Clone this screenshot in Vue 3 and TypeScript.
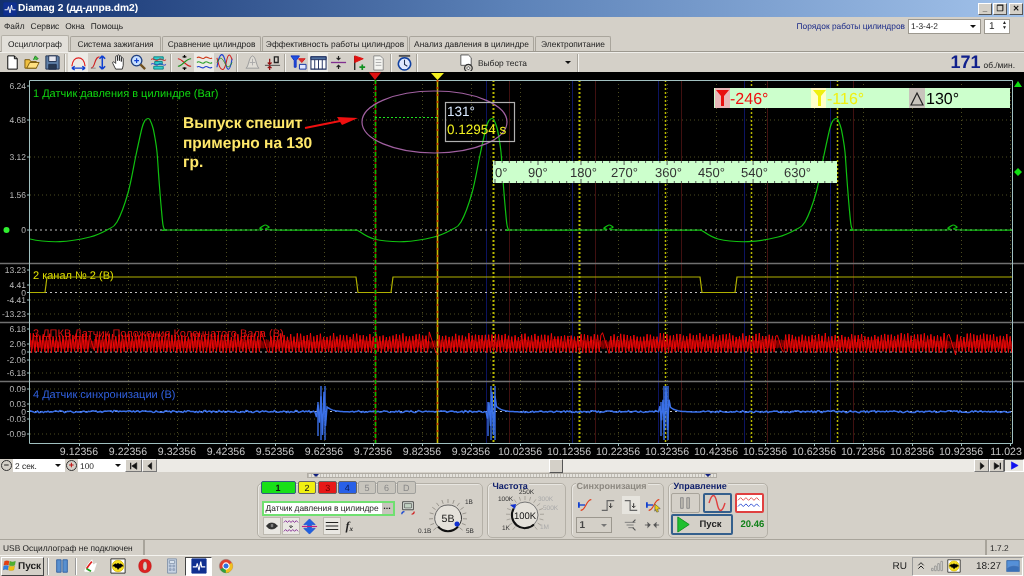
<script setup lang="ts">
import { h } from 'vue'

type P = [string, string, string, number?]
const icons: Record<string, P[]> = {
  fnew: [['M4 2h7l3 3v11H4z', '#000', '#fff', 1], ['M11 2v3h3', '#000', 'none', 1]],
  fopen: [['M1 15V6h5l1 2h6v7z', '#7a5a10', '#f0c040', 1], ['M3 15l3-6h10l-3 6z', '#7a5a10', '#ffe080', 1], ['M10 6l2-4 3 3-2 1', '#208020', '#40c040', 1]],
  fsave: [['M2 2h13l1 1v13H2z', '#203050', '#6080a8', 1], ['M5 2h8v6H5z', '#203050', '#e8e8f0', 1], ['M5 11h8v5H5z', '#203050', '#283850', 1]],
  amp: [['M2 13C3 1 15 1 16 13', '#e02020', 'none', 1.3], ['M2 15h14M2 15l3-2M2 15l3 2M16 15l-3-2M16 15l-3 2', '#1040d0', 'none', 1.4]],
  shift: [['M1 15C6 15 4 3 10 3', '#d02020', 'none', 1.2], ['M1 15h5', '#888', 'none', 1], ['M13 2v14M13 2l-3 3M13 2l3 3M13 16l-3-3M13 16l3-3', '#1040d0', 'none', 1.6]],
  hand: [['M6 16L3 10c-1-2 1-2 2-1l1 1V3c0-1.500 2-1.500 2 0v4V2c0-1.500 2-1.500 2 0v5V3c0-1.500 2-1.500 2 0v5V5c0-1.500 2-1.500 2 0v7l-1 4z', '#222', '#fff', 0.9]],
  zoom: [['M7 1.500a5.500 5.500 0 1 0 .01 0z', '#204080', '#c8e0ff', 1.4], ['M4.500 7h5M7 4.500v5', '#1040d0', 'none', 1.3], ['M11 11l5 5', '#705020', 'none', 2.4]],
  stack: [['M4 3h10v3H4zM5 8h8v3H5zM4 13h10v3H4z', '#108080', '#30d0d0', 1], ['M1 6c3-3 5 3 8 0s5 3 8 0', '#d02020', 'none', 1], ['M1 11c3-3 5 3 8 0s5 3 8 0', '#2040d0', 'none', 1]],
  cross: [['M2 5c5 0 8 8 14 8', '#d02020', 'none', 1.2], ['M2 13c5 0 8-8 14-8', '#209020', 'none', 1.2], ['M9 1v3M9 14v3M7 3h4M7 15h4', '#000', 'none', 1.3]],
  waves: [['M1 4c3-3 5 3 8 0s5 3 8 0', '#d04020', 'none', 1.2], ['M1 9c3-3 5 3 8 0s5 3 8 0', '#30a030', 'none', 1.2], ['M1 14c3-3 5 3 8 0s5 3 8 0', '#2040d0', 'none', 1.2]],
  over: [['M1 14C4-4 8-2 10 9s5 9 7-4', '#2040d0', 'none', 1.2], ['M1 4c4 18 8 14 10 4s4-8 6-2', '#d02020', 'none', 1.1], ['M1 9c3-6 5-6 8 0s5 6 8 0', '#209020', 'none', .9]],
  bell: [['M2 15C5 14 5 3 9 2c4 1 4 12 7 13z', '#999', '#e0ddd6', 1], ['M9 5v7M6 9h6', '#aaa', 'none', 1]],
  zero: [['M1 12h16', '#444', 'none', 1], ['M6 5v5M6 14v3M4 9l2 2 2-2M4 15l2-2 2 2', '#901010', 'none', 1.3], ['M11 3h4v6h-4z', '#222', 'none', 1.4]],
  funnel: [['M1 2h9L6.500 7v7H4.500V7z', '#1030c0', '#2050e0', 1], ['M9 5h7l-3.500 4z', '#d02020', '#e03030', 1], ['M10 11h7v5h-7z', '#1030a0', '#e0e8ff', 1]],
  table: [['M1 3h16v13H1z', '#203060', '#fff', 1.100], ['M1 3h16v3H1z', '#203060', '#5070a0', 1], ['M5 6v10M9 6v10M13 6v10', '#203060', 'none', 1]],
  hline: [['M1 9h16', '#803090', 'none', 1.4], ['M9 2v4M7 4l2 2 2-2M9 16v-4M7 14l2-2 2 2', '#222', 'none', 1.2]],
  flag: [['M5 2v15', '#222', 'none', 1.400], ['M5 2l9 3-9 4z', '#e01010', '#e01010', 1], ['M13 11v6M10 14h6', '#109020', 'none', 1.8]],
  doc: [['M4 2h7l3 3v12H4z', '#888', '#f4f4f0', 1], ['M6 6h6M6 9h6M6 12h6', '#aaa', 'none', 1]],
  clock: [['M9 4a6.500 6.500 0 1 0 .01 0z', '#1040a0', '#e0e8ff', 1.600], ['M9 6v5l3 2', '#203050', 'none', 1.100], ['M3 2h12', '#555', 'none', 2]],
  eye: [['M2 9c3-5 10-5 14 0c-4 5-11 5-14 0z', '#222', '#333', 1], ['M8 7h2v3H8z', '#888', '#888', 1]],
  wave2: [['M1 5l2-2 2 2 2-2 2 2 2-2 2 2 2-2 2 2', '#802090', 'none', 1], ['M1 15l2-2 2 2 2-2 2 2 2-2 2 2 2-2 2 2', '#802090', 'none', 1], ['M9 8v2M7 9l2 2 2-2', '#222', 'none', 1]],
  updown: [['M9 1L3 7h4v4H3l6 6 6-6h-4V7h4z', '#1850d0', '#2060e0', .8], ['M1 9h16', '#c02080', 'none', 1.200]],
  lines: [['M2 5h14M2 9h14M2 13h14', '#222', 'none', 1.200]],
  cycle: [['M3 2h12v9H3z', '#333', '#e8f0e8', 1], ['M5 4h8v5H5z', '#555', '#c0d0c0', .8], ['M2 16a3 3 0 0 1 3-3', '#1040d0', 'none', 1.300], ['M16 13a3 3 0 0 1-3 3', '#d02020', 'none', 1.300]],
  syn1: [['M1 9h7', '#1040d0', 'none', 1.500], ['M1 6v6', '#1040d0', 'none', 2], ['M3 15C9 15 9 3 15 3', '#e04020', 'none', 1.300]],
  syn2: [['M2 15h6V4h8', '#666', 'none', 1.300], ['M12 7v5M10 10l2 2 2-2', '#333', 'none', 1.100]],
  syn3: [['M2 4h6v11h8', '#666', 'none', 1.300], ['M12 7v5M10 10l2 2 2-2', '#333', 'none', 1.100]],
  syn4: [['M1 9h7', '#1040d0', 'none', 1.500], ['M1 6v6', '#1040d0', 'none', 2], ['M3 15C9 15 9 3 15 3', '#e04020', 'none', 1.300], ['M10 8l6 5-3 .5 1 3-2 .5-1-3-1 2z', '#444', '#f0d010', .6]],
  syn5: [['M2 6h12M4 9h8M6 12h6', '#777', 'none', 1], ['M14 3l-3 3M14 15l-3-3', '#555', 'none', 1.300]],
  syn6: [['M1 9h6M11 9h6', '#666', 'none', 1.300], ['M4 6l3 3-3 3M14 6l-3 3 3 3', '#555', '#555', 1]],
  pause: [['M4 3h3v12H4zM11 3h3v12h-3z', '#888', '#bdb9b0', 1]],
  sine: [['M1 9c3-10 6-10 8 0s5 10 8 0', '#e04040', 'none', 1.400]],
  flame: [['M2 14C5 8 7 5 10 2l1 6 4-2-3 9H2z', '#fff', '#fff', 1], ['M4 12C6 9 8 6 10 4', '#e02020', 'none', 2], ['M4 12l5 3', '#20a020', 'none', 2]],
  winxp: [['M2 3c2-1 4-1 6 0l-1 5c-2-1-4-1-6 0z', '#c03010', '#e84010', .4], ['M9 3c2 1 4 1 7 0l-1 5c-3 1-5 1-7 0z', '#309020', '#50b030', .4], ['M1 9c2-1 4-1 6 0l-1 5c-2-1-4-1-6 0z', '#2050b0', '#3080e0', .4], ['M8 9c2 1 4 1 7 0l-1 5c-3 1-5 1-7 0z', '#c09000', '#f0c010', .4]],
  bat: [['M1 1h16v16H1z', '#222', '#fff', 1], ['M9 2.500a6.500 6.500 0 1 0 .01 0z', '#d0b000', '#f8e020', .8], ['M3 9c2-2 3-3 4-2l2-1 2 1c1-1 2 0 4 2-2 0-2 1-3 2-1-1-1 0-3 2-1-2-2-3-3-2 0-1-1-2-3-2z', '#000', '#000', .5]],
  opera: [['M9 1.500C4 1.500 2 5 2 9s2 7.500 7 7.500S16 13 16 9s-2-7.500-7-7.500zM9 4c1.800 0 2.500 2 2.500 5s-.7 5-2.500 5-2.500-2-2.500-5S7.200 4 9 4z', '#b01010', '#e02020', .6]],
  calc: [['M4 1h10v16H4z', '#8090a8', '#c8d4e4', 1], ['M6 3h6v3H6z', '#8090a8', '#e8f0f8', 1], ['M6 8h2v2H6zM10 8h2v2h-2zM6 12h2v2H6zM10 12h2v2h-2z', '#90a0b8', '#a0b4cc', 1]],
  book: [['M3 2h5v14H3zM10 2h5v14h-5z', '#3060a0', '#5890d0', 1]],
  diam: [['M1 1h16v16H1z', '#103090', '#103090', 1], ['M2 10h4l1-4 2 8 2-10 1 6h4', '#fff', 'none', 1.200]],
  chrome: [['M9 1.500a7.500 7.500 0 1 0 .01 0z', '#888', '#e04030', .6], ['M2.600 13A7.500 7.500 0 0 0 12 16L9 9z', '#30a040', '#30a040', .4], ['M15.600 5.500A7.500 7.500 0 0 1 9 16.500L9 9z', '#f0c020', '#f0c020', .4], ['M9 5.500a3.500 3.500 0 1 0 .01 0z', '#fff', '#3070e0', 1.200]],
  desk: [['M1 2h16v14H1z', '#3060a0', '#5590d8', 1], ['M1 12c5-4 10-4 16-2v6H1z', '#7090c0', '#3a70b8', .5]],
  signal: [['M2 15h2v-3H2zM6 15h2V9H6zM10 15h2V6h-2zM14 15h2V3h-2z', '#888', '#e8e6e0', 1]],
  chev: [['M5 8l4-4 4 4M5 13l4-4 4 4', '#222', 'none', 1.500]],
  gear: [['M3 1h8l3 3v8H3z', '#555', '#fff', 1], ['M11 11a4 4 0 1 0 .01 0z', '#333', '#d8d4cc', 1.300], ['M11 13.500a1.500 1.500 0 1 0 .01 0z', '#333', '#fff', .8]],
  first: [['M3 3v12', '#111', 'none', 2], ['M14 3v12L5 9z', '#111', '#111', 1]],
  prev: [['M12 3v12L5 9z', '#111', '#111', 1]],
  next: [['M6 3v12l7-6z', '#111', '#111', 1]],
  last: [['M15 3v12', '#111', 'none', 2], ['M4 3v12l9-6z', '#111', '#111', 1]],
  play: [['M4 3v12l11-6z', '#1010f0', '#1010f0', 1]],
  go: [['M3 1v16l12-8z', '#109020', '#20c030', 1]],
}
const Ico = (p: { n: string; s?: number }) =>
  h('svg', { width: p.s ?? 18, height: p.s ?? 18, viewBox: '0 0 18 18', class: 'ico' },
    (icons[p.n] ?? []).map((q) => h('path', { d: q[0], stroke: q[1], fill: q[2], 'stroke-width': q[3] ?? 1 })))

const tabs = ['Осциллограф', 'Система зажигания', 'Сравнение цилиндров', 'Эффективность работы цилиндров', 'Анализ давления в цилиндре', 'Электропитание']
const tabW = [68, 91, 99, 146, 125, 76]

const frac = (n: number) => { const v = Math.sin(n * 12.9898) * 43758.5453; return v - Math.floor(v) }

// channel 1
const shape: [number, number][] = [[-135, 230], [-118, 239], [-88, 241.7], [-58, 237], [-41, 230], [-31, 222], [-20, 193], [-12, 155], [-6, 128], [-3, 120.5], [0, 118.5], [2, 120], [5, 128], [7, 138], [9, 152], [11, 180], [13, 205], [15, 225], [17, 230], [22, 230], [107, 230], [112, 228], [117, 225], [121, 227], [125, 230], [209, 230]]
function smooth(pts: [number, number][]) {
  let d = `M${pts[0][0]} ${pts[0][1]}`
  for (let i = 0; i < pts.length - 1; i++) {
    const a = pts[Math.max(i - 1, 0)], b = pts[i], c = pts[i + 1], e = pts[Math.min(i + 2, pts.length - 1)]
    d += `C${(b[0] + (c[0] - a[0]) / 6).toFixed(1)} ${(b[1] + (c[1] - a[1]) / 6).toFixed(1)} ${(c[0] - (e[0] - b[0]) / 6).toFixed(1)} ${(c[1] - (e[1] - b[1]) / 6).toFixed(1)} ${c[0]} ${c[1]}`
  }
  return d
}
const ch1 = [148, 492, 836].map((x0) => smooth(shape.map(([dx, y]) => [x0 + dx, y] as [number, number]))).join('')

// channel 2
let ch2 = 'M30 292.500H45L47 277H'
for (const x of [356, 700]) ch2 += `${x}L${x + 2} 292.500H${x + 35}L${x + 37} 277H`
ch2 += '1012'

// channel 3: bright saw bars and a denser, darker band between them
const gaps = [92, 265, 433, 606, 780, 952]
let ch3 = 'M30 345'
let ch3b = 'M30 345'
for (let x = 30, i = 0; x < 1012; x += 1.650, i++) {
  const g = gaps.find((v) => Math.abs(x - v) < 4)
  if (g !== undefined) {
    const t = (x - g + 4) / 8
    ch3 += `L${x.toFixed(1)} ${(331 + 25 * t).toFixed(1)}`
  } else {
    const y = i % 2 === 0 ? 333 + frac(i) * 4 : 351.500 + frac(i) * 1.200
    ch3 += `L${x.toFixed(1)} ${y.toFixed(1)}`
  }
}
for (let x = 30, i = 0; x < 1012; x += 0.850, i++) {
  const y = i % 2 === 0 ? 339 + frac(i + 3) * 3 : 349 - frac(i + 9) * 2
  ch3b += `L${x.toFixed(1)} ${y.toFixed(1)}`
}

// channel 4
let ch4 = 'M30 412'
const bursts = [323, 493, 666]
for (let x = 30, i = 0; x < 1012; x += 1.500, i++) {
  const b = bursts.find((v) => x > v - 7 && x < v + 28)
  let y = 411.600 + (frac(i + 7) - 0.5) * 2
  if (b !== undefined) {
    const dx = x - b
    if (dx > 3) y = 412 - 6 * Math.exp(-(dx - 3) / 6)
    else y = 412 + (i % 2 === 0 ? -1 : 1) * (26 * Math.exp(-Math.abs(dx) / 4))
  }
  ch4 += `L${x.toFixed(1)} ${y.toFixed(1)}`
}
const spikes = bursts.map((b) => `M${b - 2} 386V440M${b + 2} 386V440M${b - 5} 402V436`).join('')

const yLabels: [string, number][] = [['6.24', 86], ['4.68', 120], ['3.12', 157], ['1.56', 195], ['0', 230], ['13.23', 270], ['4.41', 285], ['0', 292.500], ['-4.41', 300], ['-13.23', 314], ['6.18', 329], ['2.06', 344], ['0', 352], ['-2.06', 360], ['-6.18', 373], ['0.09', 389], ['0.03', 404], ['0', 411.500], ['-0.03', 419], ['-0.09', 434]]
const gridY = [120, 157, 195, 285, 300, 314, 344, 360, 373, 389, 404, 419, 434]
const gridX = Array.from({ length: 20 }, (_, i) => 79 + 49 * i)
const xLabels = gridX.map((x, i) => ({ x, t: i === 19 ? '11.023' : (9.12356 + 0.1 * i).toFixed(5) }))
const vYellow = [493, 579, 665, 751, 837]
const vBlue = [486, 572, 658, 744, 830]
const vRed = [509, 595, 681, 767, 853]
const dayLabels: [string, number][] = [['0°', 495], ['90°', 528], ['180°', 570], ['270°', 611], ['360°', 655], ['450°', 698], ['540°', 741], ['630°', 784]]
const scaleTicks = Array.from({ length: 48 }, (_, i) => 495 + i * 7.17)

const chans = [
  { t: '1', c: 'c1' }, { t: '2', c: 'c2' }, { t: '3', c: 'c3' }, { t: '4', c: 'c4' },
  { t: '5', c: 'cx' }, { t: '6', c: 'cx' }, { t: 'D', c: 'cx' },
]
const group1 = ['fnew', 'fopen', 'fsave']
const group2 = ['amp', 'shift', 'hand', 'zoom', 'stack']
const group3 = ['cross', 'waves', 'over']
const group4 = ['bell', 'zero']
const group5 = ['funnel', 'table', 'hline', 'flag', 'doc']
const quick = ['flame', 'bat', 'opera', 'calc']

function ticks(cx: number, cy: number, r1: number, r2: number, from: number, to: number, n: number) {
  let d = ''
  for (let i = 0; i <= n; i++) {
    const a = ((from + ((to - from) * i) / n) * Math.PI) / 180
    d += `M${(cx + Math.cos(a) * r1).toFixed(1)} ${(cy + Math.sin(a) * r1).toFixed(1)}L${(cx + Math.cos(a) * r2).toFixed(1)} ${(cy + Math.sin(a) * r2).toFixed(1)}`
  }
  return d
}
const knobTicks = ticks(32, 28, 15, 19, 140, 400, 14)
const knob2Ticks = ticks(37, 30, 15, 19, 130, 410, 16)
</script>

<template>
  <div class="app">
    <header class="title">
      <Ico n="diam" :s="14" />
      <span class="title-text">Diamag 2 (дд-дпрв.dm2)</span>
      <div class="winbtns">
        <span class="wb">_</span><span class="wb">❐</span><span class="wb x">✕</span>
      </div>
    </header>

    <nav class="menu">
      <span>Файл</span><span>Сервис</span><span>Окна</span><span>Помощь</span>
      <div class="order">
        <span class="order-label">Порядок работы цилиндров</span>
        <span class="sel order-sel">1-3-4-2<i class="arrow"></i></span>
        <span class="sel spin">1<b>▲<br />▼</b></span>
      </div>
    </nav>

    <div class="tabs">
      <span v-for="(t, i) in tabs" :key="t" class="tab" :class="{ active: i === 0 }" :style="{ width: tabW[i] + 'px' }">{{ t }}</span>
    </div>

    <div class="toolbar">
      <span v-for="n in group1" :key="n" class="tb"><Ico :n="n" :s="17" /></span>
      <i class="sep"></i>
      <span v-for="n in group2" :key="n" class="tb" :class="{ on: n === 'amp' }"><Ico :n="n" :s="17" /></span>
      <i class="sep"></i>
      <span v-for="n in group3" :key="n" class="tb" :class="{ on: n === 'waves' }"><Ico :n="n" :s="17" /></span>
      <i class="sep sep-w"></i>
      <span v-for="n in group4" :key="n" class="tb"><Ico :n="n" :s="17" /></span>
      <i class="sep"></i>
      <span v-for="n in group5" :key="n" class="tb" :class="{ on: n === 'table' }"><Ico :n="n" :s="17" /></span>
      <i class="sep"></i>
      <span class="tb"><Ico n="clock" :s="17" /></span>
      <i class="sep"></i>
      <span class="test"><Ico n="gear" :s="17" /><span class="test-t">Выбор теста</span><i class="arrow"></i></span>
      <i class="sep"></i>
      <span class="rpm"><b>171</b><small>об./мин.</small></span>
    </div>

    <svg class="scope" width="1024" height="387" viewBox="0 72 1024 387">
      <defs>
        <clipPath id="plot"><rect x="30" y="80" width="982" height="363" /></clipPath>
      </defs>
      <rect x="0" y="72" width="1024" height="387" fill="#000" />
      <g stroke="#4c4c20" stroke-dasharray="1 3" stroke-width="1">
        <path v-for="y in gridY" :key="y" :d="`M30 ${y}H1012`" />
        <path v-for="x in gridX" :key="x" :d="`M${x}.5 80V443`" />
      </g>
      <g stroke-width="1">
        <path v-for="x in vBlue" :key="x" :d="`M${x}.5 80V443`" stroke="#0c1460" />
        <path v-for="x in vRed" :key="x" :d="`M${x}.5 80V443`" stroke="#401010" />
      </g>
      <g stroke="#b8b800" stroke-dasharray="2 2">
        <path v-for="x in vYellow" :key="x" :d="`M${x}.5 80V443`" :stroke-width="x === 493 || x === 579 ? 2 : 1.500" />
      </g>
      <g stroke="#c0c0c0" stroke-dasharray="2 3">
        <path d="M30 230H1012M30 292.500H1012M30 352H1012M30 411.500H1012" />
      </g>
      <g stroke="#707070" stroke-width="1.400">
        <path d="M0 263.500H1024M0 322.500H1024M0 381.500H1024" />
      </g>
      <path d="M29.500 80.500H1012.500V443.500H29.500Z" fill="none" stroke="#a0c0c0" />

      <text class="lab" x="33" y="97" fill="#10d810">1 Датчик давления в цилиндре (Bar)</text>
      <text class="lab" x="33" y="279" fill="#e0e000">2 канал № 2 (В)</text>
      <text class="lab" x="33" y="337" fill="#e01010">3 ДПКВ Датчик Положения Коленчатого Вала (В)</text>
      <text class="lab" x="33" y="398" fill="#3060e0">4 Датчик синхронизации (В)</text>

      <g clip-path="url(#plot)" fill="none">
        <path :d="ch3b" stroke="#900000" stroke-width="1" />
        <path :d="ch3" stroke="#f00808" stroke-width="1" />
        <path :d="ch2" stroke="#b0b000" stroke-width="1.200" />
        <path :d="ch1" stroke="#10c010" stroke-width="1.200" />
        <path :d="ch4" stroke="#3a70e8" stroke-width="1.500" />
        <path :d="spikes" stroke="#3a70e8" stroke-width="1.400" />
      </g>

      <path d="M375.500 80V443" stroke="#a00000" stroke-width="1.600" />
      <path d="M375.500 80V443" stroke="#00c000" stroke-width="1.600" stroke-dasharray="4 2" />
      <path d="M437.500 80V443" stroke="#c8b800" stroke-width="1.600" />
      <path d="M437.500 80V443" stroke="#d04000" stroke-width="1.600" stroke-dasharray="2 5" />
      <path d="M369 72.500H381L375 80Z" fill="#e01010" />
      <path d="M431 73H444L437.500 80Z" fill="#f4f020" />

      <g fill="#b8b8b8" text-anchor="end">
        <text v-for="(l, i) in yLabels" :key="i" class="ylab" x="26" :y="l[1] + 3">{{ l[0] }}</text>
      </g>
      <g stroke="#a0c0c0">
        <path v-for="(l, i) in yLabels" :key="i" :d="`M27 ${l[1]}H29`" />
        <path v-for="x in gridX" :key="x" :d="`M${x}.5 443V446`" />
      </g>
      <g fill="#c4c4c4" text-anchor="middle">
        <text v-for="l in xLabels" :key="l.x" class="xlab" :x="l.t === '11.023' ? 1006 : l.x" y="455">{{ l.t }}</text>
      </g>

      <circle cx="6.500" cy="230" r="3" fill="#30f030" />
      <path d="M1014 87L1018 81L1022 87Z" fill="#10e010" />
      <path d="M1018 168L1022 172L1018 176L1014 172Z" fill="#10e010" />

      <ellipse cx="434.500" cy="122" rx="72.500" ry="31" fill="none" stroke="#a060a0" stroke-width="1.200" />
      <path d="M375 117.500H437" stroke="#20e020" stroke-dasharray="2 2" />
      <text class="note" x="183" y="128">Выпуск спешит</text>
      <text class="note" x="183" y="148">примерно на 130</text>
      <text class="note" x="183" y="167">гр.</text>
      <path d="M305 128L340 121" stroke="#f01010" stroke-width="2" />
      <path d="M358 118L337 117L342 125Z" fill="#f01010" />

      <rect x="445.500" y="102.500" width="69" height="39" fill="none" stroke="#b0b0b0" stroke-width="1.200" />
      <text class="tip" x="447" y="116" fill="#d8e8ff">131°</text>
      <text class="tip" x="447" y="134" fill="#f0f020">0.12954 s</text>

      <rect x="493" y="161" width="344" height="22" fill="#ccffcc" />
      <g stroke="#555">
        <path v-for="(x, i) in scaleTicks" :key="i" :d="`M${x.toFixed(1)} 161V${i % 6 === 0 ? 165 : 163}M${x.toFixed(1)} 183V${i % 6 === 0 ? 179 : 181}`" />
      </g>
      <text v-for="l in dayLabels" :key="l[0]" class="deg" :x="l[1]" y="177">{{ l[0] }}</text>

      <rect x="714" y="88" width="296" height="20" fill="#ccffcc" />
      <rect x="715" y="88" width="15" height="20" fill="#e8b8b8" />
      <path d="M716 90H729L724 96V106H721V96Z" fill="#e81010" />
      <text class="val" x="730" y="104" fill="#f01010">-246°</text>
      <rect x="811" y="88" width="15" height="20" fill="#ffffc8" />
      <path d="M813 90H826L821 96V106H818V96Z" fill="#f0f010" />
      <text class="val" x="827" y="104" fill="#f0f010">-116°</text>
      <rect x="909" y="88" width="16" height="20" fill="#c8c4bc" />
      <path d="M917 93L923 105H911Z" fill="none" stroke="#222" stroke-width="1.200" />
      <text class="val" x="926" y="104" fill="#000">130°</text>
    </svg>

    <div class="ctl">
      <span class="cbtn"><span class="rnd">−</span></span>
      <span class="csel w49">2 сек.<i class="arrow"></i></span>
      <span class="cbtn"><span class="rnd red">+</span></span>
      <span class="csel w46">100<i class="arrow"></i></span>
      <span class="nav nav-first"><Ico n="first" :s="10" /></span>
      <span class="nav"><Ico n="prev" :s="10" /></span>
      <span class="track"><i class="thumb"></i></span>
      <span class="nav"><Ico n="next" :s="10" /></span>
      <span class="nav"><Ico n="last" :s="10" /></span>
      <span class="nav nav-play"><Ico n="play" :s="11" /></span>
    </div>

    <section class="panel">
      <div class="ruler"><i class="mk"></i><i class="mk"></i></div>
      <div class="groups">
        <div class="grp g1">
          <div class="g1-left">
            <div class="chrow">
              <span v-for="c in chans" :key="c.t" class="ch" :class="c.c">{{ c.t }}</span>
            </div>
            <div class="comborow">
              <span class="combo">Датчик давления в цилиндре<i class="dots">...</i></span>
              <Ico n="cycle" :s="16" />
            </div>
            <div class="minis">
              <span class="mini on"><Ico n="eye" :s="14" /></span>
              <span class="mini on"><Ico n="wave2" :s="16" /></span>
              <span class="mini"><Ico n="updown" :s="17" /></span>
              <span class="mini on m-gap"><Ico n="lines" :s="16" /></span>
              <span class="fx">fₓ</span>
            </div>
          </div>
          <svg class="knob" width="64" height="48" viewBox="0 0 64 48">
            <path :d="knobTicks" stroke="#9a968e" fill="none" />
            <circle cx="32" cy="28" r="13" fill="#e4e1da" />
            <path d="M22 36.500A13 13 0 0 0 42 36.500" stroke="#111" stroke-width="2" fill="none" />
            <path d="M42 36.500A13 13 0 0 0 44 22" stroke="#333" stroke-width="1" fill="none" />
            <path d="M22 36.500A13 13 0 0 1 32 15A13 13 0 0 1 44 22" stroke="#666" stroke-width="1" fill="none" />
            <circle cx="41" cy="34" r="2.500" fill="#1030d0" />
            <text class="kb" x="32" y="31.500" text-anchor="middle">5В</text>
            <text class="ks" x="49" y="14">1В</text>
            <text class="ks" x="50" y="43">5В</text>
            <text class="ks" x="2" y="43">0.1В</text>
          </svg>
        </div>

        <div class="grp g2">
          <div class="gt">Частота</div>
          <svg class="knob2" width="76" height="45" viewBox="0 4 76 45">
            <path :d="knob2Ticks" stroke="#a8a49c" fill="none" />
            <circle cx="37" cy="30" r="13" fill="#e4e1da" stroke="#777" />
            <path d="M25.700 23.500A13 13 0 0 0 46 39.400" stroke="#111" stroke-width="2" fill="none" />
            <path d="M22 20l6 -1 -1 5z" fill="#1030d0" />
            <text class="kb2" x="37" y="33.500" text-anchor="middle">100K</text>
            <text class="ks" x="31" y="9">250K</text>
            <text class="ks" x="10" y="16">100K</text>
            <text class="ks dim" x="50" y="16">300K</text>
            <text class="ks dim" x="55" y="25">500K</text>
            <text class="ks dim" x="52" y="44">1M</text>
            <text class="ks" x="14" y="45">1K</text>
          </svg>
        </div>

        <div class="grp g3">
          <div class="gt gray">Синхронизация</div>
          <div class="srow">
            <Ico n="syn1" :s="16" /><Ico n="syn2" :s="16" /><span class="syn-on"><Ico n="syn3" :s="16" /></span><Ico n="syn4" :s="16" />
          </div>
          <div class="srow r2">
            <span class="ssel">1<i class="arrow gr"></i></span>
            <Ico n="syn5" :s="16" /><Ico n="syn6" :s="16" />
          </div>
        </div>

        <div class="grp g4">
          <div class="gt">Управление</div>
          <div class="crow">
            <span class="cb"><Ico n="pause" :s="16" /></span>
            <span class="cb blue"><Ico n="sine" :s="18" /></span>
            <span class="cb ramp">
              <svg width="26" height="16" viewBox="0 0 28 18">
                <path d="M1 6l3-3 3 3 3-3 3 3 3-3 3 3 3-3 3 3" stroke="#e04040" fill="none" />
                <path d="M1 13l3-3 3 3 3-3 3 3 3-3 3 3 3-3 3 3" stroke="#2040d0" fill="none" />
              </svg>
            </span>
          </div>
          <div class="crow">
            <span class="start"><Ico n="go" :s="17" /><b>Пуск</b></span>
            <span class="timer">20.46</span>
          </div>
        </div>
      </div>
    </section>

    <div class="status">
      <span class="st st1">USB Осциллограф не подключен</span>
      <span class="st st2"></span>
      <span class="st st3">1.7.2</span>
    </div>

    <footer class="taskbar">
      <span class="startbtn"><Ico n="winxp" :s="14" /><b>Пуск</b></span>
      <span class="tsep"></span>
      <span class="tk tk-book"><Ico n="book" :s="16" /></span>
      <span class="tsep tsep2"></span>
      <span v-for="n in quick" :key="n" class="tk"><Ico :n="n" :s="16" /></span>
      <span class="tk active"><Ico n="diam" :s="16" /></span>
      <span class="tk"><Ico n="chrome" :s="16" /></span>
      <span class="lang">RU</span>
      <span class="tray">
        <Ico n="chev" :s="12" /><Ico n="signal" :s="14" /><Ico n="bat" :s="14" />
        <span class="clock">18:27</span>
        <Ico n="desk" :s="14" />
      </span>
    </footer>
  </div>
</template>

<style>
html, body { margin: 0; background: #d4d0c8; overflow: hidden; }
</style>

<style scoped>
.app { width: 1024px; height: 576px; display: flex; flex-direction: column; background: #d4d0c8; font-family: "Liberation Sans", Arial, sans-serif; font-size: 8.4px; color: #222; overflow: hidden; text-rendering: geometricPrecision; filter: blur(0.3px); }
.ico { display: block; flex: none; }
.title { height: 17px; flex: none; display: flex; align-items: center; gap: 1px; padding-left: 3px; box-sizing: border-box; background: linear-gradient(90deg, #12306e 0%, #5c82b8 50%, #a2c2ea 100%); }
.title-text { color: #fff; font-weight: bold; font-size: 10.2px; }
.winbtns { margin-left: auto; display: flex; gap: 1px; padding-right: 1px; }
.wb { width: 14px; height: 12px; background: #d4d0c8; border: 1px solid; border-color: #fff #555 #555 #fff; box-sizing: border-box; font-size: 8px; line-height: 10px; text-align: center; color: #111; font-weight: bold; }
.wb.x { margin-left: 1px; }
.menu { height: 18px; flex: none; display: flex; align-items: center; gap: 6px; padding-left: 4px; box-sizing: border-box; }
.order { margin-left: auto; display: flex; align-items: center; gap: 3px; padding-right: 14px; }
.order-label { color: #1a2a88; }
.sel { background: #fff; border: 1px solid #9c988f; height: 15px; box-sizing: border-box; display: flex; align-items: center; padding-left: 2px; position: relative; }
.order-sel { width: 73px; }
.spin { width: 26px; padding-left: 4px; font-size: 10px; }
.spin b { margin-left: auto; margin-right: 2px; font-size: 5px; line-height: 5px; font-weight: normal; }
.arrow { display: block; width: 0; height: 0; margin-left: auto; margin-right: 4px; border: 3px solid transparent; border-top: 3px solid #111; border-bottom: 0; }
.arrow.gr { border-top-color: #777; }
.tabs { height: 17px; flex: none; display: flex; align-items: flex-end; gap: 1px; padding-left: 1px; box-sizing: border-box; border-bottom: 1px solid #9c988f; }
.tab { height: 15px; display: flex; align-items: center; justify-content: center; box-sizing: border-box; border: 1px solid #a9a59c; border-bottom: 0; border-radius: 2px 2px 0 0; background: #d4d0c8; white-space: nowrap; }
.tab.active { height: 17px; background: #e3e0da; border-color: #b4b0a7; margin-bottom: -1px; position: relative; }
.toolbar { height: 20px; flex: none; display: flex; align-items: center; padding-left: 2px; box-sizing: border-box; border-top: 1px solid #efeeea; }
.tb { width: 20px; height: 19px; display: flex; align-items: center; justify-content: center; box-sizing: border-box; }
.tb.on { background: #ecebe6; }
.sep { width: 2px; height: 18px; margin: 0 2px; border-left: 1px solid #a8a49b; border-right: 1px solid #f4f3ef; box-sizing: border-box; }
.sep-w { margin-right: 4px; }
.test { display: flex; align-items: center; width: 155px; padding-left: 38px; box-sizing: border-box; gap: 3px; }
.test-t { white-space: nowrap; }
.rpm { margin-left: auto; display: flex; align-items: baseline; gap: 3px; padding-right: 9px; color: #10208c; }
.rpm b { font-size: 18px; }
.rpm small { font-size: 8.4px; color: #222; }
.scope { display: block; flex: none; }
.lab { font-size: 11px; }
.ylab { font-size: 8.5px; }
.xlab { font-size: 10.6px; }
.note { font-size: 15.5px; font-weight: bold; fill: #ffe86a; }
.tip { font-size: 13.5px; }
.deg { font-size: 13px; fill: #333; }
.val { font-size: 16px; }
.ctl { height: 13px; flex: none; display: flex; align-items: center; position: relative; }
.cbtn { width: 13px; height: 13px; display: flex; align-items: center; justify-content: center; }
.rnd { width: 11px; height: 11px; border-radius: 50%; border: 1px solid #333; box-sizing: border-box; display: flex; align-items: center; justify-content: center; font-size: 9px; background: #d4d0c8; font-weight: bold; line-height: 1; }
.rnd.red { color: #c01010; }
.csel { background: #fff; height: 13px; display: flex; align-items: center; box-sizing: border-box; padding-left: 2px; }
.w49 { width: 52px; }
.w46 { width: 47px; }
.nav { height: 13px; width: 15px; background: #d4d0c8; border: 1px solid; border-color: #fff #777 #777 #fff; box-sizing: border-box; display: flex; align-items: center; justify-content: center; }
.nav-first { width: 17px; }
.nav-play { background: #e8e6e0; border-color: #555 #fff #fff #555; width: 20px; }
.track { flex: 1; height: 13px; background: #eceae5; position: relative; }
.thumb { position: absolute; left: 392px; top: 0; width: 14px; height: 14px; background: #d4d0c8; border: 1px solid; border-color: #fff #555 #555 #fff; box-sizing: border-box; }
.panel { height: 67px; flex: none; display: flex; flex-direction: column; align-items: center; box-sizing: border-box; }
.ruler { width: 410px; height: 5px; margin-top: 1px; flex: none; box-sizing: border-box; background: repeating-linear-gradient(90deg, #c0bdb5 0 1px, #e4e2dc 1px 3px); border: 1px solid #b0aca4; display: flex; justify-content: space-between; padding: 0 5px; }
.mk { display: block; width: 0; height: 0; border: 3px solid transparent; border-top: 3px solid #102080; border-bottom: 0; }
.groups { display: flex; margin-top: 5px; height: 55px; gap: 4px; }
.grp { border: 1px solid #b4b0a7; border-radius: 5px; box-sizing: border-box; height: 55px; box-shadow: inset 1px 1px 0 #e8e6e1; }
.g1 { width: 226px; display: flex; padding-left: 3px; }
.g1-left { width: 155px; flex: none; }
.chrow { display: flex; gap: 1px; margin-top: -3px; }
.ch { width: 19px; height: 13px; box-sizing: border-box; border: 1px solid #666; display: flex; align-items: center; justify-content: center; font-size: 9px; border-radius: 2px; color: #111; }
.c1 { width: 36px; background: #18e018; margin-right: 1px; border-color: #355a80; font-weight: bold; }
.c2 { background: #f0f010; margin-right: 1px; }
.c3 { background: #e81818; color: #600; }
.c4 { background: #2860e8; color: #0a1a50; }
.cx { background: #c8c5bd; color: #888; border-color: #a0a09c; }
.comborow { display: flex; align-items: center; gap: 5px; margin-top: 6px; margin-left: 1px; }
.combo { width: 133px; flex: none; height: 15px; background: #fff; border: 2px solid #70e070; box-sizing: border-box; display: flex; align-items: center; padding-left: 2px; white-space: nowrap; }
.dots { margin-left: auto; width: 11px; height: 11px; background: #c8c5bd; font-style: normal; text-align: center; line-height: 6px; font-weight: bold; font-size: 9px; }
.minis { display: flex; margin-top: 1px; margin-left: 2px; gap: 1px; align-items: center; height: 18px; }
.mini { width: 18px; height: 18px; display: flex; align-items: center; justify-content: center; box-sizing: border-box; }
.mini.on { background: #e9e7e2; border: 1px solid #bdb9b0; }
.m-gap { margin-left: 3px; }
.fx { margin-left: 4px; font-family: "Liberation Serif", serif; font-style: italic; font-weight: bold; font-size: 12px; }
.knob { flex: none; margin-top: 6px; }
.ks { font-size: 6.5px; fill: #333; }
.ks.dim { fill: #aaa; }
.kb { font-size: 10.5px; fill: #111; }
.kb2 { font-size: 9.5px; fill: #111; }
.g2 { width: 79px; }
.g3 { width: 93px; margin-left: 1px; }
.g4 { width: 100px; }
.gt { font-weight: bold; font-size: 9px; color: #10206c; margin: -3px 0 0 4px; background: #d4d0c8; width: max-content; padding: 0 1px; line-height: 11px; }
.gt.gray { color: #8c8880; }
.knob2 { display: block; margin-top: -3px; }
.srow { display: flex; align-items: center; gap: 6px; padding-left: 6px; margin-top: 4px; height: 18px; }
.r2 { margin-top: 2px; gap: 5px; padding-left: 4px; }
.syn-on { width: 18px; height: 18px; background: #e6e4de; display: flex; align-items: center; justify-content: center; }
.ssel { width: 36px; height: 16px; border: 1px solid #9c988f; box-sizing: border-box; display: flex; align-items: center; padding-left: 3px; margin-right: 6px; font-size: 10px; font-weight: bold; color: #444; }
.crow { display: flex; gap: 3px; padding-left: 2px; margin-top: 1px; align-items: center; }
.cb { width: 29px; height: 20px; display: flex; align-items: center; justify-content: center; box-sizing: border-box; border: 1px solid #a8a49b; border-radius: 2px; }
.cb.blue { border: 2px solid #345f8c; }
.cb.ramp { border: 2px solid #e04040; background: #fff; }
.start { width: 62px; height: 21px; display: flex; align-items: center; border: 2px solid #345f8c; border-radius: 2px; box-sizing: border-box; padding-left: 2px; }
.start b { margin-left: 8px; font-size: 9.5px; }
.timer { color: #108018; font-weight: bold; font-size: 9.5px; margin-left: 5px; }
.status { height: 16px; flex: none; display: flex; box-sizing: border-box; border-top: 1px solid #a8a49b; }
.st { display: flex; align-items: center; box-sizing: border-box; border-right: 2px solid #a8a49b; padding-left: 3px; white-space: nowrap; }
.st1 { width: 145px; }
.st2 { flex: 1; }
.st3 { width: 37px; border: 0; }
.taskbar { height: 21px; flex: none; display: flex; align-items: center; box-sizing: border-box; border-top: 1px solid #f4f3ef; background: #d4d0c8; }
.startbtn { width: 43px; height: 19px; margin-left: 1px; display: flex; align-items: center; gap: 1px; box-sizing: border-box; border: 1px solid; border-color: #fff #444 #444 #fff; padding-left: 1px; }
.startbtn b { font-size: 10px; }
.tsep { width: 2px; height: 17px; margin: 0 3px; border-left: 1px solid #999; border-right: 1px solid #fff; box-sizing: border-box; }
.tsep2 { margin-right: 0; }
.tk { width: 27px; height: 19px; display: flex; align-items: center; justify-content: center; box-sizing: border-box; }
.tk-book { width: 20px; }
.tk.active { background: #fff; border: 1px solid; border-color: #444 #fff #fff #444; }
.lang { margin-left: auto; font-size: 10px; margin-right: 5px; }
.tray { width: 111px; height: 19px; margin-right: 1px; display: flex; align-items: center; box-sizing: border-box; border: 1px solid; border-color: #999 #fff #fff #999; padding-left: 2px; gap: 3px; position: relative; }
.clock { font-size: 10px; margin-left: 12px; margin-right: 2px; }
</style>
